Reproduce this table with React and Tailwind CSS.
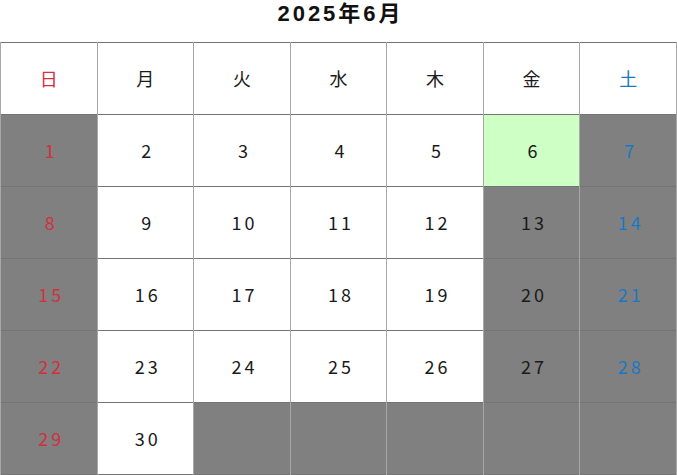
const weekdays = [
  { label: "日", tone: "text-[#d0313d]" },
  { label: "月", tone: "text-[#1a1a1a]" },
  { label: "火", tone: "text-[#1a1a1a]" },
  { label: "水", tone: "text-[#1a1a1a]" },
  { label: "木", tone: "text-[#1a1a1a]" },
  { label: "金", tone: "text-[#1a1a1a]" },
  { label: "土", tone: "text-[#1a78c2]" },
];

// closed days are gray, 6 is highlighted
const closed = [1, 7, 8, 13, 14, 15, 20, 21, 22, 27, 28, 29];

function buildWeeks() {
  const days = [];
  for (let d = 1; d <= 30; d++) days.push(d);
  while (days.length % 7) days.push(null);
  const weeks = [];
  for (let i = 0; i < days.length; i += 7) weeks.push(days.slice(i, i + 7));
  return weeks;
}

function DayCell({ day, col }) {
  let bg = "bg-white";
  if (day === null || closed.includes(day)) bg = "bg-[#808080]";
  if (day === 6) bg = "bg-[#ceffc4]";
  let tone = "text-[#1a1a1a]";
  if (col === 0) tone = "text-[#d0313d]";
  if (col === 6) tone = "text-[#1a78c2]";
  return (
    <td
      className={`h-[72px] border-x border-x-[#a8a8a8] border-t border-t-[#747474] p-0 text-center align-middle ${bg} ${tone}`}
    >
      <span className="pl-[5px] tracking-[3px]">{day}</span>
    </td>
  );
}

export default function App() {
  const weeks = buildWeeks();
  return (
    <div
      className="w-[677px] bg-white"
      style={{ fontFamily: '"Noto Sans CJK JP", sans-serif' }}
    >
      <h1
        className="flex h-[42px] items-start justify-center pl-[4px] text-[22px] leading-[27px] font-bold tracking-[3px] text-[#111]"
        style={{ fontFamily: '"Liberation Sans", "Noto Sans CJK JP", sans-serif' }}
      >
        2025年6月
      </h1>
      <table className="w-full table-fixed border-collapse border border-[#747474] text-[18px]">
        <thead>
          <tr>
            {weekdays.map((w) => (
              <th
                key={w.label}
                className={`h-[72px] border-x border-x-[#a8a8a8] p-0 text-center align-middle font-normal bg-white ${w.tone}`}
              >
                {w.label}
              </th>
            ))}
          </tr>
        </thead>
        <tbody>
          {weeks.map((week, i) => (
            <tr key={i}>
              {week.map((day, j) => (
                <DayCell key={j} day={day} col={j} />
              ))}
            </tr>
          ))}
        </tbody>
      </table>
    </div>
  );
}
